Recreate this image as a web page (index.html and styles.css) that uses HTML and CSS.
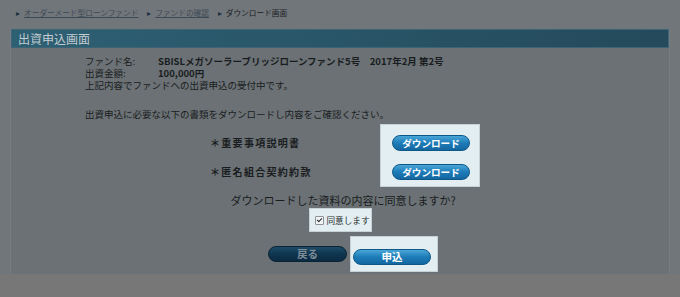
FILE: index.html
```html
<!DOCTYPE html>
<html lang="ja">
<head>
  <meta charset="UTF-8" />
  <meta name="viewport" content="width=device-width, initial-scale=1" />
  <title>出資申込画面</title>
  <link rel="stylesheet" href="styles.css">
</head>
<body>
  <div class="page">
    <div class="breadcrumb">
      <span class="arrow">&#9656;</span><a href="#">オーダーメード型ローンファンド</a>
      <span class="arrow">&#9656;</span><a href="#">ファンドの確認</a>
      <span class="arrow">&#9656;</span><span class="current">ダウンロード画面</span>
    </div>

    <div class="panel">
      <div class="panel-title">出資申込画面</div>
      <div class="panel-body">
        <div class="info">
          <div class="info-row"><span class="info-label">ファンド名:</span><span class="info-value">SBISLメガソーラーブリッジローンファンド5号　2017年2月 第2号</span></div>
          <div class="info-row"><span class="info-label">出資金額:</span><span class="info-value">100,000円</span></div>
          <div class="info-row">上記内容でファンドへの出資申込の受付中です。</div>
          <div class="info-note">出資申込に必要な以下の書類をダウンロードし内容をご確認ください。</div>
        </div>

        <div class="docs">
          <div class="doc-labels">
            <div class="doc-label">＊重要事項説明書</div>
            <div class="doc-label">＊匿名組合契約約款</div>
          </div>
          <div class="highlight doc-buttons">
            <button class="btn btn-blue btn-dl">ダウンロード</button>
            <button class="btn btn-blue btn-dl">ダウンロード</button>
          </div>
        </div>

        <div class="question">ダウンロードした資料の内容に同意しますか?</div>
        <div class="agree-wrap">
          <label class="highlight agree"><input type="checkbox" checked /> 同意します</label>
        </div>

        <div class="actions">
          <button class="btn btn-dark">戻る</button>
          <div class="highlight submit-box">
            <button class="btn btn-blue btn-submit">申込</button>
          </div>
        </div>
      </div>
    </div>
  </div>
</body>
</html>
```

FILE: styles.css
```css
body {
  margin: 0;
  background-color: #777777;
  font-family: "Noto Sans CJK JP", "Noto Sans", sans-serif;
  color: #1a1d1f;
}
.page {
  background-color: #70767a;
  height: 274px;
  padding: 0 10px;
}
.breadcrumb {
  height: 29px;
  box-sizing: border-box;
  padding: 7px 0 0 6px;
  font-size: 7.7px;
  line-height: 12px;
  white-space: nowrap;
}
.breadcrumb .arrow {
  color: #1e3242;
  font-size: 8px;
  margin: 0 4px 0 0;
}
.breadcrumb a {
  color: #3c4956;
  text-decoration: underline;
  margin-right: 7px;
}
.breadcrumb .current {
  color: #1b1d1f;
}
.panel {
  background-color: #6b7174;
  border-left: 1px solid #777d80;
  border-right: 1px solid #777d80;
  height: 245px;
  box-sizing: border-box;
}
.panel-title {
  height: 19px;
  box-sizing: border-box;
  background: linear-gradient(to right, #2e6074, #244a5b);
  border: 1px solid #3d6475;
  color: #c3ccd0;
  font-size: 12px;
  line-height: 17px;
  padding-left: 6px;
}
.panel-body {
  padding: 7px 0 0;
}
.info {
  padding-left: 74px;
  font-size: 9.5px;
  line-height: 12px;
}
.info-row {
  display: flex;
  height: 12px;
  white-space: nowrap;
}
.info-label {
  width: 73px;
}
.info-value {
  font-weight: 700;
}
.info-note {
  margin-top: 17px;
}
.docs {
  display: flex;
  margin: 5px 0 0 199px;
}
.doc-labels {
  width: 171px;
  padding-top: 10px;
  display: flex;
  flex-direction: column;
  gap: 13px;
}
.doc-label {
  height: 16px;
  line-height: 16px;
  font-size: 10px;
  letter-spacing: 1.3px;
  font-weight: 700;
}
.highlight {
  background-color: #e3eef2;
  box-shadow: 0 0 0 1px #c8d2d6;
}
.doc-buttons {
  display: flex;
  flex-direction: column;
  gap: 13px;
  padding: 10px 9px 6px 11px;
}
.btn {
  border: 1px solid #0e5888;
  border-radius: 8px;
  font-family: inherit;
  font-weight: 700;
  padding: 0;
  cursor: pointer;
}
.btn-blue {
  background: linear-gradient(#4aa6d8, #1d7cb8 50%, #1467a0);
  color: #ffffff;
}
.btn-dl {
  width: 78px;
  height: 16px;
  font-size: 9.6px;
  line-height: 14px;
}
.question {
  text-align: center;
  font-size: 11px;
  line-height: 18px;
  margin-top: 5px;
  padding-left: 6px;
}
.agree-wrap {
  display: flex;
  justify-content: center;
}
.agree {
  display: flex;
  align-items: center;
  gap: 3px;
  height: 22px;
  width: 61px;
  box-sizing: border-box;
  padding-left: 5px;
  font-size: 8.6px;
  color: #2a2e30;
  white-space: nowrap;
  overflow: hidden;
}
.agree input {
  appearance: none;
  position: relative;
  width: 9px;
  height: 9px;
  margin: 0;
  border: 1px solid #8d9396;
  border-radius: 1px;
  background-color: #f2f4f5;
}
.agree input:checked::after {
  content: "";
  position: absolute;
  left: 2px;
  top: 0;
  width: 2px;
  height: 4px;
  border-right: 1.5px solid #222628;
  border-bottom: 1.5px solid #222628;
  transform: rotate(45deg);
}
.actions {
  display: flex;
  align-items: center;
  gap: 4px;
  padding-left: 257px;
  margin-top: 6px;
}
.btn-dark {
  width: 79px;
  height: 16px;
  background: linear-gradient(#1d4b66, #0f3550 50%, #0b2b41);
  border-color: #0a2436;
  color: #7f8d96;
  font-size: 10.5px;
  line-height: 14px;
}
.submit-box {
  padding: 5px 6px 5px 2px;
}
.btn-submit {
  width: 78px;
  height: 16px;
  font-size: 10.5px;
  line-height: 14px;
}
```
